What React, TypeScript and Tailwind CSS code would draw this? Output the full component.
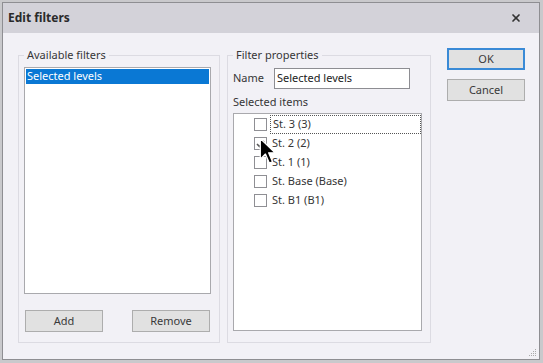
import { X } from "lucide-react";

const items = [
  { label: "St. 3 (3)", checked: false, focused: true },
  { label: "St. 2 (2)", checked: true, focused: false },
  { label: "St. 1 (1)", checked: false, focused: false },
  { label: "St. Base (Base)", checked: false, focused: false },
  { label: "St. B1 (B1)", checked: false, focused: false },
];

const font = { fontFamily: '"Noto Sans", "Open Sans", sans-serif' };

const Button = ({ label, primary, className }: { label: string; primary?: boolean; className?: string }) => (
  <button
    className={`h-[22px] w-[78px] bg-[#e1e1e1] text-[11px] text-[#3a3a3a] ${
      primary ? "border-2 border-[#3a8ad6]" : "border border-[#adadad]"
    } ${className ?? ""}`}
  >
    {label}
  </button>
);

const App = () => {
  return (
    <div className="relative h-[363px] w-[543px] overflow-hidden bg-[#c9c9cc] pl-[2px] pt-[2px]" style={font}>
      <div className="flex h-[358px] w-[538px] flex-col border border-[#8e8e92] bg-[#f2f1f6]">
        {/* title bar */}
        <div className="flex h-[30px] items-center justify-between bg-[#d3d2d9] pl-[5px] pr-[17px]">
          <span className="text-[12px] font-bold text-[#2a2a2a]">Edit filters</span>
          <X size={12} strokeWidth={3.4} className="text-[#333]" />
        </div>

        {/* body */}
        <div className="flex pl-[15px] pt-[15px] text-[11px] text-[#363636]">
          {/* available filters */}
          <fieldset className="h-[295px] w-[202px] border border-[#dcdbe2] pb-[10px] pl-[5px]">
            <legend className="px-[3px] leading-[14px]">Available filters</legend>
            <div className="mt-[5px] h-[227px] w-[187px] border border-[#a9a9ad] bg-white p-[1px]">
              <div className="flex h-[15px] items-center bg-[#0a78d4] pl-[1px] text-white">Selected levels</div>
            </div>
            <div className="mt-[16px] flex w-[186px] justify-between pl-[1px]">
              <Button label="Add" />
              <Button label="Remove" className="w-[77px]" />
            </div>
          </fieldset>

          {/* filter properties */}
          <fieldset className="ml-[7px] h-[295px] w-[204px] border border-[#dcdbe2] pl-[5px]">
            <legend className="px-[3px] leading-[14px]">Filter properties</legend>
            <div className="mt-[6px] flex items-center">
              <span className="w-[41px]">Name</span>
              <div className="flex h-[21px] w-[136px] items-center border border-[#8d8d92] bg-white pl-[2px] text-[#222]">
                Selected levels
              </div>
            </div>
            <div className="mt-[6px] leading-[14px]">Selected items</div>
            <div className="mt-[4px] h-[218px] w-[189px] border border-[#a9a9ad] bg-white pt-[1px]">
              {items.map((it) => (
                <div key={it.label} className="flex h-[19px] items-center pl-[20px]">
                  <div className="flex h-[13px] w-[13px] items-center justify-center border border-[#8f8f94] bg-white">
                    {it.checked && (
                      <svg width="9" height="8" viewBox="0 0 9 8">
                        <path d="M1 4 L3.5 6.5 L8 1" fill="none" stroke="#555" strokeWidth="1.6" />
                      </svg>
                    )}
                  </div>
                  <div
                    className={`ml-[3px] flex h-[19px] items-center pl-[2px] ${
                      it.focused ? "w-[151px] border border-dotted border-[#555]" : ""
                    }`}
                  >
                    {it.label}
                  </div>
                </div>
              ))}
            </div>
          </fieldset>

          {/* buttons */}
          <div className="ml-[16px] flex flex-col gap-[9px]">
            <Button label="OK" primary />
            <Button label="Cancel" />
          </div>
        </div>

        {/* resize grip */}
        <div className="mt-auto flex justify-end pb-[2px] pr-[2px]">
          <svg width="8" height="8" viewBox="0 0 8 8">
            <rect x="6" y="0" width="1" height="1" fill="#aaa" />
            <rect x="4" y="2" width="1" height="1" fill="#aaa" />
            <rect x="6" y="2" width="1" height="1" fill="#aaa" />
            <rect x="2" y="4" width="1" height="1" fill="#aaa" />
            <rect x="4" y="4" width="1" height="1" fill="#aaa" />
            <rect x="6" y="4" width="1" height="1" fill="#aaa" />
            <rect x="0" y="6" width="1" height="1" fill="#aaa" />
            <rect x="2" y="6" width="1" height="1" fill="#aaa" />
            <rect x="4" y="6" width="1" height="1" fill="#aaa" />
            <rect x="6" y="6" width="1" height="1" fill="#aaa" />
          </svg>
        </div>
      </div>

      {/* mouse cursor */}
      <svg className="absolute left-[259px] top-[137px]" width="18" height="29" viewBox="0 0 14 22">
        <path
          d="M1 1 L1 17 L5 13 L8 20 L10.5 19 L7.5 12 L12.5 12 Z"
          fill="#000"
          stroke="#fff"
          strokeWidth="1"
          strokeLinejoin="round"
        />
      </svg>
    </div>
  );
};

export default App;
